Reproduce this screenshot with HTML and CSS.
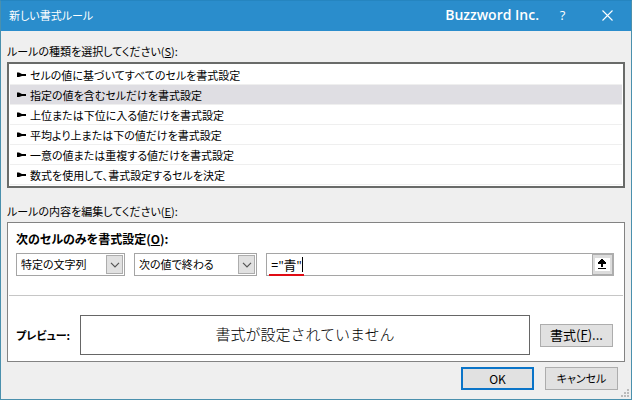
FILE: index.html
```html
<!DOCTYPE html>
<html lang="ja">
<head>
  <meta charset="UTF-8">
  <meta name="viewport" content="width=device-width, initial-scale=1.0">
  <title>新しい書式ルール</title>
  <link rel="stylesheet" href="styles.css">
</head>
<body>
  <div class="dialog">
    <header class="titlebar">
      <h1>新しい書式ルール</h1>
      <span class="brand">Buzzword Inc.</span>
      <button class="title-btn" type="button" aria-label="ヘルプ">?</button>
      <button class="title-btn" type="button" aria-label="閉じる">
        <svg width="11" height="11" viewBox="0 0 11 11"><path d="M.5 .5l10 10M10.500 .5l-10 10" stroke="#fff" stroke-width="1.1" fill="none"/></svg>
      </button>
    </header>

    <main class="content">
      <p class="caption" id="typeLabel">ルールの種類を選択してください(<u>S</u>):</p>
      <div class="rules" role="radiogroup" aria-labelledby="typeLabel">
        <label class="rule"><input type="radio" name="rule"><svg class="marker" viewBox="0 0 10 6"><path d="M0 .5h2L5 2h4v2H5L2 5H0z"/></svg>セルの値に基づいてすべてのセルを書式設定</label>
        <label class="rule"><input type="radio" name="rule" checked><svg class="marker" viewBox="0 0 10 6"><path d="M0 .5h2L5 2h4v2H5L2 5H0z"/></svg>指定の値を含むセルだけを書式設定</label>
        <label class="rule"><input type="radio" name="rule"><svg class="marker" viewBox="0 0 10 6"><path d="M0 .5h2L5 2h4v2H5L2 5H0z"/></svg>上位または下位に入る値だけを書式設定</label>
        <label class="rule"><input type="radio" name="rule"><svg class="marker" viewBox="0 0 10 6"><path d="M0 .5h2L5 2h4v2H5L2 5H0z"/></svg>平均より上または下の値だけを書式設定</label>
        <label class="rule"><input type="radio" name="rule"><svg class="marker" viewBox="0 0 10 6"><path d="M0 .5h2L5 2h4v2H5L2 5H0z"/></svg>一意の値または重複する値だけを書式設定</label>
        <label class="rule"><input type="radio" name="rule"><svg class="marker" viewBox="0 0 10 6"><path d="M0 .5h2L5 2h4v2H5L2 5H0z"/></svg>数式を使用して、書式設定するセルを決定</label>
      </div>

      <p class="caption" id="editLabel">ルールの内容を編集してください(<u>E</u>):</p>
      <section class="editor" aria-labelledby="editLabel">
        <div class="condition">
          <label class="heading" for="kind">次のセルのみを書式設定(<u>O</u>):</label>
          <div class="fields">
            <div class="combo combo-kind">
              <select id="kind"><option>特定の文字列</option></select>
              <span class="arrow"><svg width="10" height="6" viewBox="0 0 10 6"><path d="M1 .8l4 4 4-4" stroke="#555" stroke-width="1.2" fill="none"/></svg></span>
            </div>
            <div class="combo combo-match">
              <select aria-label="条件"><option>次の値で終わる</option></select>
              <span class="arrow"><svg width="10" height="6" viewBox="0 0 10 6"><path d="M1 .8l4 4 4-4" stroke="#555" stroke-width="1.2" fill="none"/></svg></span>
            </div>
            <div class="ref">
              <input type="text" value="=&quot;青&quot;" aria-label="値">
              <button class="ref-btn" type="button" aria-label="セルを選択">
                <svg width="15" height="13" viewBox="0 0 15 13" shape-rendering="crispEdges"><path fill="#fff" d="M0 0h15v13H0z"/><path d="M6 1h2v1h1v1h1v1h1v2H8v3H6V6H3V4h1V3h1V2h1zM3 10h8v1H3z"/></svg>
              </button>
              <span class="caret"></span>
              <span class="redline"></span>
            </div>
          </div>
        </div>
        <div class="preview">
          <span class="preview-label">プレビュー:</span>
          <div class="sample">書式が設定されていません</div>
          <button class="btn btn-format" type="button">書式(<u>F</u>)...</button>
        </div>
      </section>

      <footer class="actions">
        <button class="btn btn-default" type="button">OK</button>
        <button class="btn" type="button">キャンセル</button>
      </footer>
    </main>

    <svg class="grip" width="8" height="8" viewBox="0 0 8 8" shape-rendering="crispEdges"><path fill="#bbb" d="M6 0h2v2H6zM3 3h2v2H3zM6 3h2v2H6zM0 6h2v2H0zM3 6h2v2H3zM6 6h2v2H6z"/></svg>
  </div>
</body>
</html>
```
FILE: styles.css
```css
* {
  box-sizing: border-box;
}
body {
  margin: 0;
  font-family: "Noto Sans CJK JP", sans-serif;
  font-size: 11px;
  line-height: 20px;
  font-feature-settings: "palt";
  color: #000;
}
button, input, select {
  font: inherit;
  font-feature-settings: inherit;
  color: inherit;
}
.dialog {
  position: relative;
  display: flex;
  flex-direction: column;
  min-height: 100vh;
  background: #efefef;
  border: 1px solid #4a90ad;
  border-top-color: #2585c0;
}
.titlebar {
  display: flex;
  align-items: center;
  height: 30px;
  padding: 0 1px 2px 8px;
  background: #2a8dcc;
  color: #fff;
}
.titlebar h1 {
  flex: 1;
  margin: 0;
  font-size: 11px;
  font-weight: normal;
}
.brand {
  margin-right: 1px;
  font-family: "Open Sans", sans-serif;
  font-size: 14px;
  font-weight: 600;
}
.title-btn {
  display: flex;
  align-items: center;
  justify-content: center;
  width: 45px;
  height: 28px;
  padding: 0;
  border: none;
  background: none;
  color: #fff;
  font-family: "Open Sans", sans-serif;
  font-size: 13px;
}
.content {
  flex: 1;
  padding: 10px 6px 8px;
}
.caption {
  margin: 0;
  line-height: 21px;
}
.rules {
  margin-bottom: 13px;
  padding: 1px;
  background: #fff;
  border: 2px solid #696b69;
}
.rule {
  display: flex;
  align-items: center;
  height: 20px;
  padding: 1px 0 0 7px;
  border-bottom: 1px solid #efefef;
}
.rule input {
  position: absolute;
  opacity: 0;
}
.rule:has(input:checked) {
  background: #dfdee3;
}
.marker {
  width: 10px;
  height: 6px;
  margin-right: 3px;
}
.editor {
  background: #fff;
  border: 1px solid #838383;
}
.condition {
  margin: 0 1px;
  padding: 6px 9px 19px 7px;
  border-bottom: 1px solid #c6c6c6;
}
.heading {
  display: block;
  font-size: 12px;
  font-weight: bold;
}
.fields {
  display: flex;
  gap: 9px;
  margin-top: 4px;
}
.combo {
  position: relative;
}
.combo-kind {
  width: 109px;
}
.combo-match {
  width: 123px;
}
.combo select {
  display: block;
  width: 100%;
  height: 23px;
  padding: 0 20px 1px 4px;
  appearance: none;
  background: #fff;
  border: 1px solid #a5a5a5;
  border-radius: 0;
}
.arrow {
  position: absolute;
  top: 2px;
  right: 2px;
  bottom: 2px;
  width: 17px;
  display: flex;
  align-items: center;
  justify-content: center;
  background: #e1e1e1;
  border: 1px solid #adadad;
  pointer-events: none;
}
.ref {
  position: relative;
  flex: 1;
  display: flex;
}
.ref input {
  flex: 1;
  min-width: 0;
  height: 23px;
  padding: 0 4px 1px;
  font-family: "Open Sans", "Noto Sans CJK JP", sans-serif;
  font-size: 13px;
  background: #fff;
  border: 1px solid #a5a5a5;
  border-right: none;
}
.ref-btn {
  display: flex;
  align-items: center;
  justify-content: center;
  width: 22px;
  height: 23px;
  padding: 0;
  background: #dcdcdc;
  border: 2px solid #adadad;
  border-left-width: 1px;
}
.caret {
  position: absolute;
  left: 36px;
  top: 4px;
  width: 1px;
  height: 15px;
  background: #000;
}
.redline {
  position: absolute;
  left: 3px;
  top: 21px;
  width: 35px;
  height: 2px;
  background: #e00b14;
}
.preview {
  display: flex;
  align-items: center;
  gap: 10px;
  padding: 19px 11px 6px 8px;
}
.preview-label {
  font-weight: bold;
}
.sample {
  flex: 1;
  height: 40px;
  border: 1px solid #666;
  font-size: 15px;
  font-weight: 300;
  font-feature-settings: normal;
  line-height: 36px;
  text-align: center;
}
.btn {
  width: 73px;
  height: 23px;
  padding: 0 0 1px;
  line-height: 20px;
  background: #e1e1e1;
  border: 1px solid #adadad;
}
.btn-format {
  font-size: 13px;
}
.btn-default {
  font-size: 12px;
  border: 2px solid #0a74c8;
}
.actions {
  display: flex;
  justify-content: flex-end;
  gap: 11px;
  padding: 5px 7px 0 0;
}
.grip {
  position: absolute;
  right: 2px;
  bottom: 2px;
}
```
